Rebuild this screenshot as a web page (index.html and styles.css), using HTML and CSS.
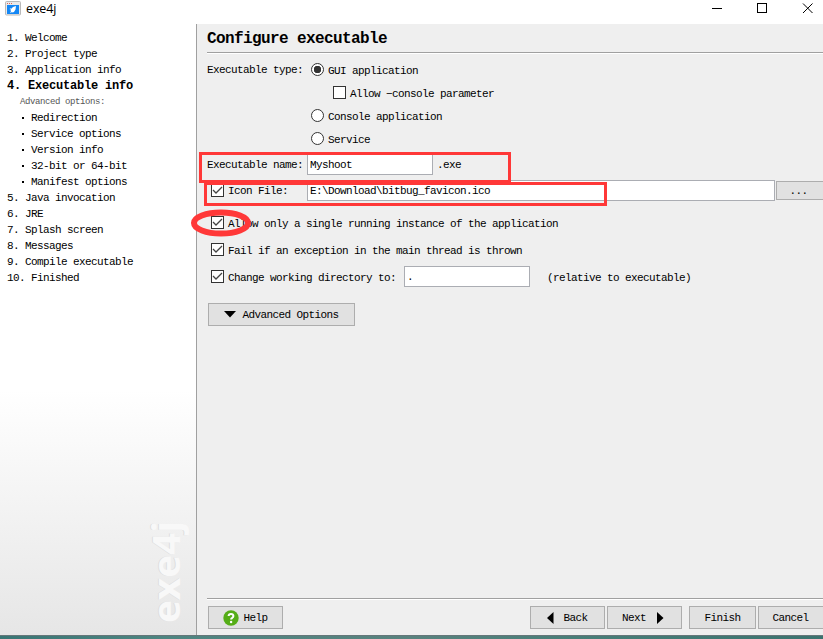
FILE: index.html
```html
<!DOCTYPE html>
<html lang="en">
<head>
<meta charset="utf-8">
<title>exe4j</title>
<link rel="stylesheet" href="styles.css">
</head>
<body>
<div class="window">
  <header class="titlebar">
    <svg class="app-icon" width="16" height="15" viewBox="0 0 16 15"><rect x=".5" y=".5" width="15" height="13.5" rx="1" fill="#e9e9e9" stroke="#b9b9b9"/><path d="M2 2.5h1M4 2.5h1M6 2.5h1" stroke="#d9685f"/><rect x="2" y="4" width="12" height="9" fill="#1387f5"/><path d="M11 5 8 6 6 8 5.500 9.500 7.500 11.500 9 11 10.500 8.500ZM6 7 4.500 8 5.500 8.500ZM6 10 5 12 7 11Z" fill="#fff"/></svg>
    <span class="app-name">exe4j</span>
    <svg class="controls" width="103" height="16" viewBox="0 0 103 16" fill="none" stroke="#000"><path d="M0 8.500h10"/><rect x="45.500" y="3.500" width="9" height="9"/><path d="m91 3.500 9.500 9.500m0-9.500L91 13"/></svg>
  </header>
  <div class="body">
    <nav class="sidebar">
      <ol class="steps">
        <li>1. Welcome</li><li>2. Project type</li><li>3. Application info</li>
        <li class="current">4. Executable info</li>
        <li class="caption">Advanced options:</li>
        <li class="sub">Redirection</li><li class="sub">Service options</li><li class="sub">Version info</li><li class="sub">32-bit or 64-bit</li><li class="sub">Manifest options</li>
        <li>5. Java invocation</li><li>6. JRE</li><li>7. Splash screen</li><li>8. Messages</li><li>9. Compile executable</li><li>10. Finished</li>
      </ol>
      <svg class="brand" width="46" height="112" viewBox="0 0 46 112"><g transform="translate(36 107) rotate(-90)"><text class="brand-shade" x="0" y="-1" textLength="102" lengthAdjust="spacingAndGlyphs">exe4j</text><text class="brand-face" x="0" y="0" textLength="102" lengthAdjust="spacingAndGlyphs">exe4j</text></g></svg>
    </nav>
    <main class="main">
      <h1>Configure executable</h1>
      <div class="form">
        <div class="types">
          <span class="type-label">Executable type:</span>
          <div class="options">
            <label class="option"><i class="radio on"></i>GUI application</label>
            <label class="option nested"><i class="check"></i>Allow −console parameter</label>
            <label class="option"><i class="radio"></i>Console application</label>
            <label class="option"><i class="radio"></i>Service</label>
          </div>
        </div>
        <div class="row name-row"><span class="field-label">Executable name:</span><span class="input short">Myshoot</span><span class="suffix">.exe</span></div>
        <div class="row file-row"><label class="field-label ticked"><i class="check"><svg width="13" height="13"><path d="m2 6 3 3 6-6"/></svg></i>Icon File:</label><span class="input file">E:\Download\bitbug_favicon.ico</span><span class="button browse">...</span></div>
        <div class="row flag"><i class="check"><svg width="13" height="13"><path d="m2 6 3 3 6-6"/></svg></i>Allow only a single running instance of the application</div>
        <div class="row flag"><i class="check"><svg width="13" height="13"><path d="m2 6 3 3 6-6"/></svg></i>Fail if an exception in the main thread is thrown</div>
        <div class="row flag"><i class="check"><svg width="13" height="13"><path d="m2 6 3 3 6-6"/></svg></i><span class="dir-label">Change working directory to:</span><span class="input short">.</span><span class="hint">(relative to executable)</span></div>
        <span class="button advanced"><svg width="12" height="7"><path d="M0 0h12L6 6.500Z"/></svg>Advanced Options</span>
      </div>
      <footer class="footer">
        <span class="button help"><svg width="16" height="16" viewBox="0 0 16 16"><circle cx="8" cy="8" r="7.700" fill="#55ad17"/><path d="M5.600 6Q5.700 3.900 8 3.900T10.400 6Q10.400 7.100 9.200 7.800 8.100 8.400 8.100 9.600" fill="none" stroke="#fff" stroke-width="2"/><circle cx="8.100" cy="12" r="1.200" fill="#fff"/></svg>Help</span>
        <span class="button back"><svg width="7" height="12"><path d="M6.500 0v12L0 6Z"/></svg>Back</span>
        <span class="button next">Next<svg width="7" height="12"><path d="M0 0v12L6.500 6Z"/></svg></span>
        <span class="button finish">Finish</span>
        <span class="button cancel">Cancel</span>
      </footer>
    </main>
  </div>
  <div class="desktop"></div>
  <svg class="marks" width="823" height="639" viewBox="0 0 823 639"><rect x="200.500" y="153.500" width="309" height="28"/><rect x="205.500" y="183.500" width="400" height="21"/><ellipse cx="221" cy="223" rx="27" ry="10.500"/></svg>
</div>
</body>
</html>
```
FILE: styles.css
```css
* { box-sizing: border-box; }
body { margin: 0; overflow: hidden; color: #000; font: 11px/16px "Liberation Mono", monospace; letter-spacing: -.6px; }
.window { position: relative; width: 823px; height: 639px; display: flex; flex-direction: column; overflow: hidden; white-space: nowrap; }
.titlebar { height: 24px; display: flex; align-items: flex-start; background: #fff; }
.app-icon { margin: 1px 5px 0 5px; }
.app-name { font: 12.5px/18px "Open Sans", sans-serif; letter-spacing: -.1px; }
.controls { margin-left: auto; margin-right: 8px; }
.body { flex: 1; min-height: 0; display: flex; }
.sidebar { width: 197px; border-right: 1px solid #a0a0a0; background: linear-gradient(#fff 0 60%, #e6e6e6 100%); display: flex; flex-direction: column; justify-content: space-between; }
.steps { list-style: none; margin: 0; padding: 6px 0 0 7px; }
.steps li { height: 16px; }
.steps .current { font-weight: 700; font-size: 12px; letter-spacing: -.2px; }
.steps .caption { padding-left: 13px; font-size: 9px; letter-spacing: -.4px; color: #555; }
.steps .sub { display: flex; align-items: center; padding-left: 15px; }
.sub::before { content: ""; width: 2px; height: 2px; margin-right: 7px; background: #000; }
.brand { align-self: flex-end; overflow: visible; margin: 0 6px 7px 0; font: 700 38px "Open Sans", sans-serif; letter-spacing: 0; }
.brand-shade { fill: #dedede; }
.brand-face { fill: #f8f8f8; }
.main { flex: 1; min-width: 0; display: flex; flex-direction: column; background: #efefef; }
h1 { height: 30px; margin: 0 0 0 10px; border-bottom: 1px solid #fff; box-shadow: inset 0 -1px #a0a0a0; font-size: 16px; line-height: 31px; letter-spacing: -.6px; }
.form { flex: 1; display: flex; flex-direction: column; padding: 5px 0 0 10px; }
.types { display: flex; }
.type-label { width: 104px; line-height: 23px; }
.option { display: flex; align-items: center; height: 23px; }
.nested { padding-left: 22px; }
.radio, .check { display: block; flex: none; width: 13px; height: 13px; border: 1px solid #333; background: #fff; margin: 0 4px 2px 0; }
.radio { border-radius: 50%; }
.radio.on { background: radial-gradient(circle, #333 0 3.5px, #fff 4px); }
.check svg { display: block; margin: -1px; fill: none; stroke: #444; stroke-width: 1.3; }
.row { display: flex; align-items: center; }
.name-row { height: 21px; margin-top: 3px; }
.file-row { height: 21px; margin-top: 5px; }
.field-label { flex: none; width: 100px; }
.ticked { display: flex; align-items: center; padding-left: 4px; }
.ticked .check { margin-bottom: 0; }
.input { flex: none; height: 21px; padding: 0 2px; border: 1px solid #abadb3; background: #fff; line-height: 20px; }
.short { width: 126px; }
.file { width: 468px; margin-right: 1px; }
.suffix { margin-left: 4px; }
.flag { height: 27px; padding-left: 4px; }
.flag .input { margin-bottom: 2px; }
.file-row + .flag { margin-top: 9px; }
.dir-label { flex: none; width: 176px; }
.hint { margin-left: 17px; }
.button { display: flex; flex: none; align-items: center; justify-content: center; height: 23px; border: 1px solid #adadad; background: #e1e1e1; }
.browse { width: 56px; height: 19px; padding-right: 11px; }
.advanced { width: 147px; margin: 12px 0 0 1px; gap: 6px; }
.footer { height: 37px; margin-left: 10px; padding: 7px 0 0 1px; display: flex; border-top: 1px solid #a0a0a0; box-shadow: inset 0 1px #fff; }
.help, .back, .next { width: 75px; }
.help { gap: 4px; }
.back { margin-left: 247px; gap: 9px; }
.next { margin-left: 2px; padding-right: 3px; gap: 11px; }
.finish { width: 67px; margin-left: 7px; }
.cancel { width: 67px; margin-left: 2px; padding-right: 2px; }
.desktop { height: 4px; border-top: 1px solid #65777a; background: linear-gradient(90deg, #397574, #4e8581 20%, #59827e 50%, #487e78 70%, #3b736f); }
.marks { position: absolute; inset: 0; fill: none; stroke: #ff3838; stroke-width: 3; pointer-events: none; }
.marks ellipse { stroke-width: 6; }
```
